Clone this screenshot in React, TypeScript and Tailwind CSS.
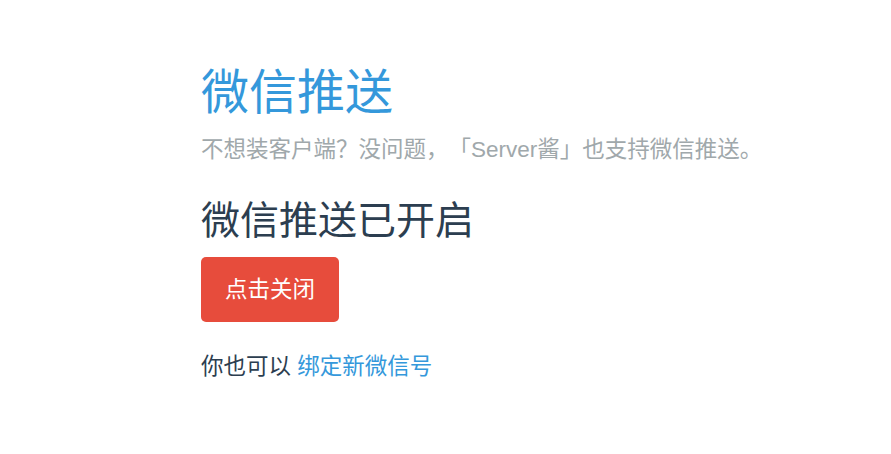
function App() {
  return (
    <div
      className="min-h-screen bg-white pl-[201px] pt-[67px] [text-spacing-trim:space-all]"
      style={{ fontFamily: '"Liberation Sans", "Noto Sans CJK SC", sans-serif' }}
    >
      <h1 className="text-[48px] leading-[52px] font-normal text-[#3498db]">
        微信推送
      </h1>
      <p className="mt-[16px] text-[22.5px] leading-[30px] text-[#a0a8ab]">
        不想装客户端？没问题，「Server酱」也支持微信推送。
      </p>

      <h2 className="mt-[33px] text-[39px] leading-[46px] font-normal text-[#2c3e50]">
        微信推送已开启
      </h2>

      <button
        type="button"
        className="mt-[13px] h-[65px] w-[138px] rounded-[5px] bg-[#e74c3c] text-[22.5px] text-white cursor-pointer hover:bg-[#d62c1a]"
      >
        点击关闭
      </button>

      <p className="mt-[30px] text-[22.5px] leading-[30px] text-[#2c3e50]">
        你也可以{" "}
        <a href="#" className="text-[#3498db] hover:underline">
          绑定新微信号
        </a>
      </p>
    </div>
  );
}

export default App;
